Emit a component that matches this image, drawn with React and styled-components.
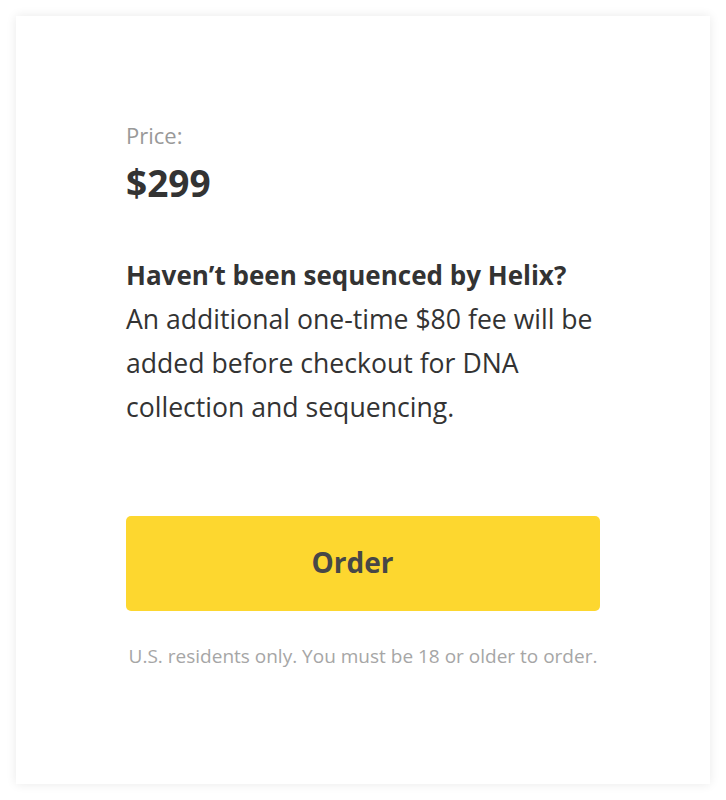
import React from 'react';
import styled, { createGlobalStyle } from 'styled-components';

const GlobalStyle = createGlobalStyle`
  html, body {
    margin: 0;
    padding: 0;
    background: #ffffff;
  }
  body {
    font-family: "Open Sans", "Noto Sans", Arial, sans-serif;
    color: #333333;
  }
`;

const Page = styled.div`
  padding: 16px;
  width: 694px;
`;

const Card = styled.div`
  background: #ffffff;
  height: 768px;
  box-sizing: border-box;
  padding: 105px 110px 0;
  box-shadow: 0 0 10px rgba(0, 0, 0, 0.09);
  display: flex;
  flex-direction: column;
`;

const PriceLabel = styled.div`
  font-size: 22px;
  line-height: 28px;
  color: #999999;
`;

const Price = styled.div`
  font-size: 37px;
  line-height: 44px;
  font-weight: 700;
  color: #333333;
  margin-top: 12px;
`;

const Notice = styled.div`
  margin-top: 48px;
  font-size: 26.6px;
  line-height: 44px;
  color: #333333;
`;

const NoticeTitle = styled.div`
  font-size: 26px;
  font-weight: 700;
`;

const OrderButton = styled.button`
  margin-top: 87px;
  height: 95px;
  padding: 0 21px 4px 0;
  border: none;
  border-radius: 5px;
  background: #fdd72f;
  color: #474747;
  font-family: inherit;
  font-size: 28px;
  font-weight: 700;
  cursor: pointer;
`;

const Disclaimer = styled.div`
  margin-top: 33px;
  text-align: center;
  font-size: 19px;
  line-height: 24px;
  color: #a6a6a6;
`;

export default function App() {
  return (
    <>
      <GlobalStyle />
      <Page>
        <Card>
          <PriceLabel>Price:</PriceLabel>
          <Price>$299</Price>
          <Notice>
            <NoticeTitle>Haven’t been sequenced by Helix?</NoticeTitle>
            An additional one-time $80 fee will be added before checkout for DNA collection and sequencing.
          </Notice>
          <OrderButton>Order</OrderButton>
          <Disclaimer>U.S. residents only. You must be 18 or older to order.</Disclaimer>
        </Card>
      </Page>
    </>
  );
}
